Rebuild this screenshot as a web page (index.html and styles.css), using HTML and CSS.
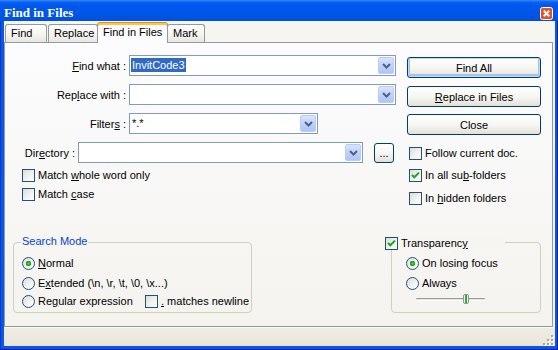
FILE: index.html
```html
<!DOCTYPE html>
<html lang="en">
<head>
    <meta charset="UTF-8">
    <title>Find in Files</title>
    <link rel="stylesheet" href="styles.css">
</head>
<body>
<div class="window">
    <div class="titlebar">
        <span class="title">Find in Files</span>
        <span class="close">
            <svg width="13" height="13" viewBox="0 0 13 13"><rect x="0.5" y="0.5" width="12" height="12" rx="2" fill="#E0542E" stroke="#fff"/><path d="M3.8 3.8 L9.2 9.2 M9.2 3.8 L3.8 9.2" stroke="#fff" stroke-width="2"/></svg>
        </span>
    </div>
    <div class="client">
        <ul class="tabs">
            <li class="tab tab-find">Find</li>
            <li class="tab tab-replace">Replace</li>
            <li class="tab tab-fif selected">Find in Files</li>
            <li class="tab tab-mark">Mark</li>
        </ul>
        <div class="panel">
            <div class="top">
                <div class="left">
                    <div class="field">
                        <label class="label"><u>F</u>ind what :</label>
                        <div class="combo w-267">
                            <span class="value"><span class="sel">InvitCode3</span></span>
                            <span class="drop"><svg width="9" height="6" viewBox="0 0 9 6"><path d="M1 1 L4.5 4.5 L8 1" fill="none" stroke="#4D6185" stroke-width="2"/></svg></span>
                        </div>
                    </div>
                    <div class="field">
                        <label class="label">Rep<u>l</u>ace with :</label>
                        <div class="combo w-267">
                            <span class="value"></span>
                            <span class="drop"><svg width="9" height="6" viewBox="0 0 9 6"><path d="M1 1 L4.5 4.5 L8 1" fill="none" stroke="#4D6185" stroke-width="2"/></svg></span>
                        </div>
                    </div>
                    <div class="field">
                        <label class="label">Filter<u>s</u> :</label>
                        <div class="combo w-189">
                            <span class="value"><span class="plain">*.*</span></span>
                            <span class="drop"><svg width="9" height="6" viewBox="0 0 9 6"><path d="M1 1 L4.5 4.5 L8 1" fill="none" stroke="#4D6185" stroke-width="2"/></svg></span>
                        </div>
                    </div>
                    <div class="dir">
                        <label class="label">Dir<u>e</u>ctory :</label>
                        <div class="combo w-285">
                            <span class="value"></span>
                            <span class="drop"><svg width="9" height="6" viewBox="0 0 9 6"><path d="M1 1 L4.5 4.5 L8 1" fill="none" stroke="#4D6185" stroke-width="2"/></svg></span>
                        </div>
                        <span class="btn browse">...</span>
                    </div>
                    <div class="check"><span class="box"></span><span>Match <u>w</u>hole word only</span></div>
                    <div class="check"><span class="box"></span><span>Match <u>c</u>ase</span></div>
                </div>
                <div class="right">
                    <span class="btn default">Find All</span>
                    <span class="btn"><u>R</u>eplace in Files</span>
                    <span class="btn">Close</span>
                    <div class="check"><span class="box"></span><span>Follow current doc.</span></div>
                    <div class="check"><span class="box"><svg width="11" height="11" viewBox="0 0 11 11"><path d="M2 5 L4.3 7.3 L9 2.6" fill="none" stroke="#21A121" stroke-width="2"/></svg></span><span>In all su<u>b</u>-folders</span></div>
                    <div class="check"><span class="box"></span><span>In <u>h</u>idden folders</span></div>
                </div>
            </div>
            <div class="bottom">
                <div class="group group-search">
                    <span class="group-title">Search Mode</span>
                    <div class="opt"><span class="radio on"></span><span><u>N</u>ormal</span></div>
                    <div class="opt"><span class="radio"></span><span>E<u>x</u>tended (\n, \r, \t, \0, \x...)</span></div>
                    <div class="opt opt-last"><span class="radio"></span><span class="regex">Re<u>g</u>ular expression</span><span class="box"></span><span><u>.</u> matches newline</span></div>
                </div>
                <div class="group group-trans">
                    <span class="group-title trans-title"><span class="box"><svg width="11" height="11" viewBox="0 0 11 11"><path d="M2 5 L4.3 7.3 L9 2.6" fill="none" stroke="#21A121" stroke-width="2"/></svg></span><span>Transparenc<u>y</u></span></span>
                    <div class="opt"><span class="radio on"></span><span>On losing focus</span></div>
                    <div class="opt"><span class="radio"></span><span>Always</span></div>
                    <div class="slider">
                        <div class="track"></div>
                        <span class="thumb"></span>
                    </div>
                </div>
            </div>
        </div>
        <div class="status">
            <svg class="grip" width="11" height="11" viewBox="0 0 11 11">
                <rect x="9" y="1" width="2" height="2" fill="#fff"/><rect x="8" y="0" width="2" height="2" fill="#A8A491"/>
                <rect x="5" y="5" width="2" height="2" fill="#fff"/><rect x="4" y="4" width="2" height="2" fill="#A8A491"/>
                <rect x="9" y="5" width="2" height="2" fill="#fff"/><rect x="8" y="4" width="2" height="2" fill="#A8A491"/>
                <rect x="1" y="9" width="2" height="2" fill="#fff"/><rect x="0" y="8" width="2" height="2" fill="#A8A491"/>
                <rect x="5" y="9" width="2" height="2" fill="#fff"/><rect x="4" y="8" width="2" height="2" fill="#A8A491"/>
                <rect x="9" y="9" width="2" height="2" fill="#fff"/><rect x="8" y="8" width="2" height="2" fill="#A8A491"/>
            </svg>
        </div>
    </div>
</div>
</body>
</html>
```

FILE: styles.css
```css
* {
    box-sizing: border-box;
}
body {
    margin: 0;
    font-family: "Liberation Sans", Arial, sans-serif;
    font-size: 11px;
    color: #000;
    background: #0A56E6;
}
.window {
    width: 558px;
    height: 350px;
    display: flex;
    flex-direction: column;
    background: #0A56E6;
    box-shadow: inset 1px 0 0 #0838C0, inset -1px 0 0 #00209C, inset 0 -1px 0 #00209C;
}
.titlebar {
    height: 21px;
    display: flex;
    justify-content: space-between;
    padding: 0 5px 0 4px;
    background: linear-gradient(#3D8BF7 0, #0B63F5 2px, #0058EE 5px, #0055E5 15px, #0050D8 21px);
}
.title {
    font-family: "Liberation Serif", "Times New Roman", serif;
    font-weight: bold;
    font-size: 13px;
    line-height: 17px;
    padding-top: 4px;
    color: #fff;
}
.close {
    margin-top: 7px;
    width: 13px;
    height: 13px;
    display: flex;
}
.client {
    flex: 1;
    margin: 0 3px 4px 4px;
    display: flex;
    flex-direction: column;
    background: #F6F5F0;
}

/* tabs */
.tabs {
    list-style: none;
    margin: 0;
    padding: 0 0 0 1px;
    height: 21px;
    display: flex;
    align-items: flex-end;
}
.tab {
    height: 18px;
    padding: 2px 0 0 5px;
    line-height: 13px;
    border: 1px solid #919B9C;
    border-bottom: 0;
    border-radius: 3px 3px 0 0;
    background: linear-gradient(#FFFFFF, #F4F3EF 60%, #E7E6E0);
    white-space: nowrap;
}
.tab-find {
    width: 42px;
    margin-right: 1px;
}
.tab-replace {
    width: 50px;
}
.tab-fif {
    width: 71px;
    margin-left: -1px;
}
.tab-mark {
    width: 38px;
    margin-left: -1px;
}
.tab.selected {
    height: 21px;
    margin-bottom: -1px;
    padding-top: 3px;
    position: relative;
    z-index: 1;
    background: #FCFCFE;
    border-top: 1px solid #E68B2C;
    box-shadow: inset 0 2px 0 #FFC73C;
}

/* panel */
.panel {
    width: 549px;
    height: 285px;
    border: 1px solid #919B9C;
    background: linear-gradient(#FCFCFE, #F4F3EE);
    display: flex;
    flex-direction: column;
}
.top {
    height: 195px;
    display: grid;
    grid-template-columns: 402px 134px;
}
.left {
    display: flex;
    flex-direction: column;
    padding-top: 12px;
}
.field {
    display: grid;
    grid-template-columns: 121px auto;
    column-gap: 3px;
    align-items: center;
    height: 21px;
    margin-top: 8px;
}
.field:first-child {
    margin-top: 0;
}
.label {
    text-align: right;
    white-space: nowrap;
}
.combo {
    height: 21px;
    display: flex;
    padding: 1px;
    border: 1px solid #7F9DB9;
    background: #fff;
    line-height: 17px;
}
.w-267 {
    width: 267px;
}
.w-189 {
    width: 189px;
}
.w-285 {
    width: 285px;
}
.value {
    flex: 1;
    white-space: nowrap;
}
.sel {
    background: #316AC5;
    color: #fff;
    padding: 1px 1px;
}
.plain {
    padding-left: 1px;
}
.drop {
    width: 16px;
    height: 17px;
    display: flex;
    align-items: center;
    justify-content: center;
    border: 1px solid #BACCF6;
    border-radius: 2px;
    background: linear-gradient(#D9E4FD, #C0D2FA 50%, #B1C5F4);
}
.dir {
    display: flex;
    align-items: center;
    height: 21px;
    margin-top: 8px;
}
.dir .label {
    width: 70px;
    margin-right: 3px;
}

/* buttons */
.btn {
    height: 21px;
    width: 134px;
    display: flex;
    align-items: center;
    justify-content: center;
    border: 1px solid #003C74;
    border-radius: 3px;
    background: linear-gradient(#FFFFFF, #F5F5F1 55%, #E3E0D6);
    white-space: nowrap;
}
.btn.default {
    box-shadow: inset 0 0 0 1px #C4D8F8, inset 0 -1px 0 2px #A5C1EE;
}
.browse {
    width: 20px;
    height: 20px;
    margin-left: 11px;
    align-items: flex-end;
    padding-bottom: 3px;
}
.right {
    display: flex;
    flex-direction: column;
    padding-top: 14px;
}
.right .btn + .btn {
    margin-top: 8px;
}
.right .btn:nth-child(3) {
    margin-top: 7px;
}

/* checkboxes and radios */
.check {
    display: flex;
    align-items: center;
    gap: 3px;
    height: 13px;
    line-height: 13px;
    white-space: nowrap;
}
.left .check {
    margin: 6px 0 0 17px;
}
.right .check {
    margin: 9px 0 0 2px;
}
.right .check:nth-child(4) {
    margin-top: 12px;
}
.right .check:nth-child(6) {
    margin-top: 10px;
}
.box {
    width: 13px;
    height: 13px;
    flex: none;
    display: flex;
    border: 1px solid #1C5180;
    background: linear-gradient(135deg, #DCDCD7, #F4F4F1 60%, #FFFFFF);
}
.radio {
    width: 13px;
    height: 13px;
    flex: none;
    border: 1px solid #1C5180;
    border-radius: 50%;
    background: linear-gradient(135deg, #DCDCD7, #F4F4F1 60%, #FFFFFF);
}
.radio.on {
    background: radial-gradient(circle, #62D85E 0, #2CA82A 1.5px, #21A121 2.5px, transparent 3px), linear-gradient(135deg, #DCDCD7, #F4F4F1 60%, #FFFFFF);
}

/* group boxes */
.bottom {
    display: flex;
    justify-content: space-between;
    padding: 0 11px 0 8px;
}
.group {
    position: relative;
    margin-top: 4px;
    height: 71px;
    border: 1px solid #D0D0BF;
    border-radius: 4px;
    padding-top: 14px;
}
.group-search {
    width: 239px;
    padding-left: 8px;
}
.group-trans {
    width: 150px;
    padding-left: 14px;
}
.group-title {
    position: absolute;
    top: -8px;
    left: 7px;
    padding: 0 1px;
    line-height: 13px;
    color: #0046D5;
    background: #F6F5F1;
}
.trans-title {
    top: -6px;
    left: -7px;
    width: 120px;
    padding: 0;
    display: flex;
    align-items: center;
    gap: 3px;
    color: #000;
}
.opt {
    display: flex;
    align-items: center;
    gap: 3px;
    height: 13px;
    line-height: 13px;
    white-space: nowrap;
}
.opt + .opt {
    margin-top: 7px;
}
.opt.opt-last {
    margin-top: 5px;
}
.regex {
    width: 104px;
}

/* slider */
.slider {
    position: relative;
    width: 69px;
    height: 10px;
    margin: 4px 0 0 10px;
    padding-top: 4px;
}
.track {
    height: 3px;
    border-top: 1px solid #9D9C99;
    border-bottom: 1px solid #fff;
    border-radius: 1px;
    background: #E3E1D8;
}
.thumb {
    position: absolute;
    left: 47px;
    top: 0;
    width: 6px;
    height: 10px;
    border: 1px solid #8D9A88;
    border-radius: 2px;
    background: linear-gradient(90deg, #fff 0, #fff 1px, #3FBE3A 1px, #21A121 3px, #fff 3px);
}

/* bottom strip */
.status {
    height: 19px;
    display: flex;
    justify-content: flex-end;
    align-items: flex-end;
    padding: 0 1px 0 0;
    border-top: 1px solid #FBFAF6;
    background: linear-gradient(#EFEDE3, #E8E6DA);
}
```
